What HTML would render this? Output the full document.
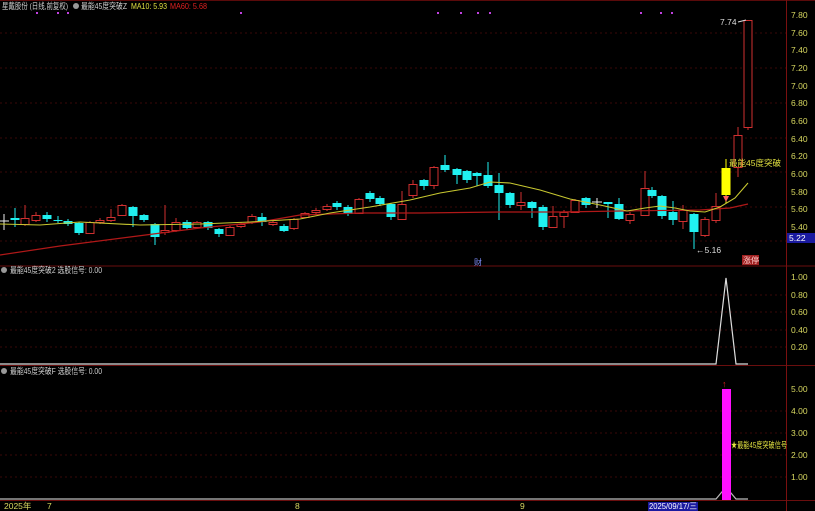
<!DOCTYPE html><html><head><meta charset="utf-8"><style>
html,body{margin:0;padding:0;background:#000;width:815px;height:511px;overflow:hidden}
svg{display:block;font-family:"Liberation Sans","Noto Sans CJK SC",sans-serif}
</style></head><body>
<svg id="s" width="815" height="511" viewBox="0 0 815 511" xmlns="http://www.w3.org/2000/svg">
<rect width="815" height="511" fill="#000"/>
<line x1="0" y1="0.5" x2="815" y2="0.5" stroke="#5a0a0a"/>
<g stroke="#3a0808" stroke-dasharray="2,3" stroke-width="1">
<line x1="0" y1="33" x2="786" y2="33"/><line x1="0" y1="68" x2="786" y2="68"/><line x1="0" y1="103" x2="786" y2="103"/><line x1="0" y1="138" x2="786" y2="138"/><line x1="0" y1="172" x2="786" y2="172"/><line x1="0" y1="207" x2="786" y2="207"/><line x1="0" y1="241" x2="786" y2="241"/>
<line x1="0" y1="295" x2="786" y2="295"/><line x1="0" y1="312" x2="786" y2="312"/><line x1="0" y1="330" x2="786" y2="330"/><line x1="0" y1="347" x2="786" y2="347"/>
<line x1="0" y1="411" x2="786" y2="411"/><line x1="0" y1="433" x2="786" y2="433"/><line x1="0" y1="455" x2="786" y2="455"/><line x1="0" y1="477" x2="786" y2="477"/>
</g>
<line x1="0" y1="266" x2="815" y2="266" stroke="#6a0e0e"/>
<line x1="0" y1="365.5" x2="815" y2="365.5" stroke="#6a0e0e"/>
<line x1="0" y1="500.5" x2="815" y2="500.5" stroke="#6a0e0e"/>
<line x1="786.5" y1="0" x2="786.5" y2="511" stroke="#7a1010"/>
<g font-size="8.5" fill="#cfcfcf">
<text x="2" y="9" textLength="66" lengthAdjust="spacingAndGlyphs">星戴股份 (日线,前复权)</text>
<circle cx="76" cy="6" r="3" fill="#999"/>
<text x="81" y="9" textLength="46" lengthAdjust="spacingAndGlyphs">最能45度突破Z</text>
<text x="131" y="9" fill="#e0e040" textLength="36" lengthAdjust="spacingAndGlyphs">MA10: 5.93</text>
<text x="170" y="9" fill="#e02020" textLength="37" lengthAdjust="spacingAndGlyphs">MA60: 5.68</text>
<circle cx="4" cy="270" r="3" fill="#999"/>
<text x="10" y="273" textLength="92" lengthAdjust="spacingAndGlyphs">最能45度突破2  选股信号: 0.00</text>
<circle cx="4" cy="371" r="3" fill="#999"/>
<text x="10" y="374" textLength="92" lengthAdjust="spacingAndGlyphs">最能45度突破F  选股信号: 0.00</text>
</g>
<g fill="#c040e0">
<rect x="36" y="12" width="2" height="2"/><rect x="57" y="12" width="2" height="2"/><rect x="67" y="12" width="2" height="2"/><rect x="240" y="12" width="2" height="2"/><rect x="437" y="12" width="2" height="2"/><rect x="460" y="12" width="2" height="2"/><rect x="477" y="12" width="2" height="2"/><rect x="489" y="12" width="2" height="2"/><rect x="640" y="12" width="2" height="2"/><rect x="660" y="12" width="2" height="2"/><rect x="671" y="12" width="2" height="2"/>
</g>
<g font-size="8.5" fill="#d8d860">
<text x="791" y="18">7.80</text><text x="791" y="36">7.60</text><text x="791" y="53">7.40</text><text x="791" y="71">7.20</text><text x="791" y="89">7.00</text><text x="791" y="106">6.80</text><text x="791" y="124">6.60</text><text x="791" y="142">6.40</text><text x="791" y="159">6.20</text><text x="791" y="177">6.00</text><text x="791" y="195">5.80</text><text x="791" y="212">5.60</text><text x="791" y="230">5.40</text>
<text x="791" y="280">1.00</text><text x="791" y="298">0.80</text><text x="791" y="315">0.60</text><text x="791" y="333">0.40</text><text x="791" y="350">0.20</text>
<text x="791" y="392">5.00</text><text x="791" y="414">4.00</text><text x="791" y="436">3.00</text><text x="791" y="458">2.00</text><text x="791" y="480">1.00</text>
</g>
<rect x="787" y="233" width="28" height="10" fill="#1a1aa0"/>
<text x="789" y="241" font-size="8.5" fill="#fff">5.22</text>
<g id="c"></g>
<polyline fill="none" stroke="#b01818" stroke-width="1.2" points="0,255 60,246 130,237 200,228 260,222 300,215 360,213 420,213 500,212 560,212 620,211 700,210 730,208 748,204"/>
<polyline fill="none" stroke="#c8c830" stroke-width="1.1" points="0,224 40,225 80,222 140,225 200,224 250,222 300,219 330,213 370,207 410,200 440,193 470,188 490,182 510,183 540,190 570,199 600,205 627,211 645,208 660,206 675,208 690,211 705,212 720,207 735,198 748,183"/>
<text x="720" y="25" font-size="8.5" fill="#ddd">7.74</text>
<line x1="738" y1="22" x2="746" y2="20" stroke="#ddd"/>
<text x="696" y="253" font-size="8.5" fill="#ddd">←5.16</text>
<text x="729" y="166" font-size="8.5" fill="#e0e040" textLength="52" lengthAdjust="spacingAndGlyphs">最能45度突破</text>
<text x="474" y="265" font-size="8" fill="#8090ff">财</text>
<rect x="742" y="255" width="17" height="10" fill="#a02020"/>
<text x="743" y="263" font-size="8" fill="#ffd0d0">涨停</text>
<polyline fill="none" stroke="#ddd" stroke-width="1.2" points="0,364 716,364 726,278 736,364 748,364"/>
<polyline fill="none" stroke="#bbb" stroke-width="1.2" points="0,499 716,499 726,487 736,499 748,499"/>
<rect x="722" y="389" width="9" height="111" fill="#ff10ff"/>
<text x="722" y="387" font-size="9" fill="#e02020">↑</text>
<text x="731" y="448" font-size="8.5" fill="#e0e040" textLength="56" lengthAdjust="spacingAndGlyphs">★最能45度突破信号</text>
<g font-size="8.5" fill="#d8d860">
<text x="4" y="509">2025年</text><text x="47" y="509">7</text><text x="295" y="509">8</text><text x="520" y="509">9</text>
</g>
<rect x="648" y="502" width="50" height="9" fill="#1a1aa0"/>
<text x="649" y="509" font-size="8.5" fill="#fff" textLength="48" lengthAdjust="spacingAndGlyphs">2025/09/17/三</text>
</svg>
<script>
var d=[[4,221,223,214,230,'w'],[15,218,220,208,227,'c'],[25,218,224,205,226,'r'],[36,215,220,212,222,'r'],[47,215,219,212,222,'c'],[58,220,221,216,223,'c'],[68,221,224,219,226,'c'],[79,223,233,222,235,'c'],[90,222,233,221,234,'r'],[100,220,222,218,224,'r'],[111,217,220,209,222,'r'],[122,205,215,204,216,'r'],[133,207,216,206,227,'c'],[144,215,220,214,222,'c'],[155,224,237,223,245,'c'],[165,230,232,205,235,'r'],[176,222,230,218,232,'r'],[187,222,228,220,230,'c'],[197,222,227,221,228,'r'],[208,222,228,221,230,'c'],[219,229,234,228,237,'c'],[230,227,235,226,236,'r'],[241,224,226,222,228,'r'],[252,216,222,214,224,'r'],[262,217,222,213,226,'c'],[273,222,224,220,226,'r'],[284,226,231,224,232,'c'],[294,219,228,218,230,'r'],[305,213,217,212,218,'r'],[316,210,212,208,214,'r'],[327,206,209,204,211,'r'],[337,203,207,201,210,'c'],[348,207,214,205,216,'c'],[359,199,213,198,214,'r'],[370,193,199,191,202,'c'],[380,198,204,196,206,'c'],[391,204,217,203,220,'c'],[402,204,219,191,220,'r'],[413,184,195,180,198,'r'],[424,180,186,179,190,'c'],[434,167,185,166,189,'r'],[445,165,170,155,172,'c'],[457,169,175,168,184,'c'],[467,171,180,170,183,'c'],[477,173,176,172,186,'c'],[488,175,186,162,188,'c'],[499,185,193,173,220,'c'],[510,193,205,192,208,'c'],[521,202,205,192,210,'r'],[532,202,208,201,218,'c'],[543,207,227,205,230,'c'],[553,216,227,206,228,'r'],[564,212,216,210,228,'r'],[575,200,212,199,213,'r'],[586,198,205,197,208,'c'],[597,202,203,198,208,'w'],[608,202,204,202,218,'c'],[619,204,219,198,220,'c'],[630,214,220,212,224,'r'],[645,188,215,171,216,'r'],[652,190,196,187,198,'c'],[662,196,216,195,219,'c'],[673,212,220,201,225,'c'],[683,210,221,205,229,'r'],[694,214,232,213,249,'c'],[705,219,235,217,237,'r'],[716,206,220,193,223,'r'],[726,168,195,159,203,'y'],[738,135,167,127,177,'r'],[748,20,127,20,130,'r']];
var g=document.getElementById('c'),h='';
d.forEach(function(a){var x=a[0],col={r:'#d03030',c:'#20f0f0',w:'#eeeeee',y:'#ffff00'}[a[5]];
h+='<line x1="'+x+'" y1="'+a[3]+'" x2="'+x+'" y2="'+a[4]+'" stroke="'+col+'"/>';
var ht=Math.max(1,a[2]-a[1]);
if(a[5]=='r')h+='<rect x="'+(x-4)+'" y="'+a[1]+'.5" width="8" height="'+ht+'" fill="#000" stroke="'+col+'"/>';
else if(a[5]=='w')h+='<line x1="'+(x-5)+'" y1="'+a[1]+'" x2="'+(x+5)+'" y2="'+a[1]+'" stroke="'+col+'"/>';
else h+='<rect x="'+(x-4.5)+'" y="'+a[1]+'" width="9" height="'+ht+'" fill="'+col+'"/>';});
h+='<path d="M723,196 L729,196 L726,202 Z" fill="#ff6060"/>';
g.innerHTML=h;
</script>
</body></html>
